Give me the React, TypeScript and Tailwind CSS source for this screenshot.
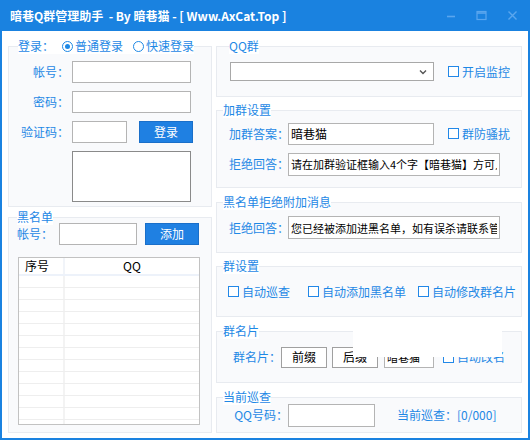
import type { ReactNode } from 'react'

const font = { fontFamily: '"Noto Sans CJK SC", "Noto Sans", sans-serif' }

function Box({
  title,
  legendLeft,
  className,
  children,
}: {
  title: ReactNode
  legendLeft: string
  className: string
  children?: ReactNode
}) {
  return (
    <div className={`relative border border-[#e8ebf0] bg-[#f9fafc] ${className}`}>
      <div
        className={`absolute -top-[9px] ${legendLeft} flex items-center whitespace-nowrap bg-white text-[12px] leading-[16px] text-[#1e88e5]`}
      >
        {title}
      </div>
      {children}
    </div>
  )
}

function Check({ label, className = '' }: { label: string; className?: string }) {
  return (
    <span className={`flex shrink-0 items-center whitespace-nowrap text-[12px] leading-[16px] text-[#1e88e5] ${className}`}>
      <span className="mr-[3px] inline-block h-[11px] w-[11px] border border-[#2288e8] bg-white" />
      {label}
    </span>
  )
}

function Radio({ label, checked }: { label: string; checked?: boolean }) {
  return (
    <span className="flex items-center">
      <span className="mr-[2px] flex h-[11px] w-[11px] items-center justify-center rounded-full border border-[#1e88e5] bg-white">
        {checked && <span className="h-[5px] w-[5px] rounded-full bg-[#1e88e5]" />}
      </span>
      {label}
    </span>
  )
}

function Field({ className, value = '' }: { className: string; value?: string }) {
  return (
    <input
      readOnly
      defaultValue={value}
      className={`shrink-0 border border-[#b4b4b4] bg-white px-[2px] text-[11px] text-black outline-none ${className}`}
    />
  )
}

function BlueButton({ label, className }: { label: string; className: string }) {
  return (
    <button className={`shrink-0 border border-[#1a6fc9] bg-[#1f80e2] text-[12px] text-white ${className}`}>
      {label}
    </button>
  )
}

function Label({ text, className }: { text: string; className: string }) {
  return (
    <span className={`shrink-0 whitespace-nowrap text-[12px] leading-[16px] text-[#1e88e5] ${className}`}>
      {text}
    </span>
  )
}

export default function App() {
  const rows = Array.from({ length: 13 })

  return (
    <div style={font} className="flex h-[440px] w-[530px] flex-col bg-[#1a82e0] px-[2px] pb-[2px]">
      {/* title bar */}
      <div className="flex h-[31px] shrink-0 items-center pl-[8px] pr-[10px]">
        <span className="whitespace-pre text-[12px] font-bold text-white">
          暗巷Q群管理助手  - By 暗巷猫 - [ Www.AxCat.Top ]
        </span>
        <div className="ml-auto flex items-center gap-[20px]">
          <svg width="10" height="10" viewBox="0 0 10 10">
            <path d="M1 5.5h8" stroke="#5aa6ee" strokeWidth="1.6" />
          </svg>
          <svg width="11" height="11" viewBox="0 0 11 11">
            <rect x="1" y="1.5" width="9" height="8" fill="none" stroke="#5aa6ee" strokeWidth="1.2" />
            <path d="M1 3h9" stroke="#5aa6ee" strokeWidth="1.6" />
          </svg>
          <svg width="11" height="11" viewBox="0 0 11 11">
            <path d="M1.5 1.5l8 8M9.5 1.5l-8 8" stroke="#5aa6ee" strokeWidth="1.4" />
          </svg>
        </div>
      </div>

      {/* body */}
      <div className="flex flex-1 gap-[4px] bg-white pl-[6px] pt-[15px]">
        {/* left column */}
        <div className="flex w-[204px] flex-col">
          <Box
            className="h-[161px]"
            legendLeft="left-[9px]"
            title={
              <>
                <span className="mr-[8px]">登录：</span>
                <span className="mr-[10px]">
                  <Radio label="普通登录" checked />
                </span>
                <Radio label="快速登录" />
              </>
            }
          >
            <div className="flex flex-col gap-[8px] pt-[14px]">
              <div className="flex items-center">
                <Label text="帐号：" className="w-[60px] text-right" />
                <Field className="ml-[3px] h-[22px] w-[119px]" />
              </div>
              <div className="flex items-center">
                <Label text="密码：" className="w-[60px] text-right" />
                <Field className="ml-[3px] h-[22px] w-[119px]" />
              </div>
              <div className="flex items-center">
                <Label text="验证码：" className="w-[60px] text-right" />
                <Field className="ml-[3px] h-[22px] w-[55px]" />
                <BlueButton label="登录" className="ml-[12px] h-[22px] w-[54px]" />
              </div>
              <div className="pl-[63px]">
                <div className="h-[51px] w-[119px] border border-[#8a8a8a] bg-white" />
              </div>
            </div>
          </Box>

          <Box className="mt-[10px] h-[216px]" legendLeft="left-[8px]" title="黑名单">
            <div className="flex items-center pl-[8px] pt-[5px]">
              <Label text="帐号：" className="" />
              <Field className="ml-[6px] h-[22px] w-[78px]" />
              <BlueButton label="添加" className="ml-[8px] h-[22px] w-[54px]" />
            </div>
            <div className="ml-[9px] mt-[12px] h-[168px] w-[182px] overflow-hidden border border-[#c2c2c2] bg-white text-[12px] text-black">
              <div className="flex h-[18px] border-b-2 border-[#edf2fa]">
                <div className="w-[46px] border-r-2 border-[#f1f4f9] pl-[6px] leading-[16px]">序号</div>
                <div className="flex-1 text-center leading-[16px]">QQ</div>
              </div>
              {rows.map((_, i) => (
                <div key={i} className="flex h-[12px] border-b border-[#eeeeee]">
                  <div className="w-[46px] border-r-2 border-[#f3f3f3]" />
                  <div className="flex-1" />
                </div>
              ))}
            </div>
          </Box>
        </div>

        {/* right column */}
        <div className="flex w-[306px] flex-col">
          <Box className="flex h-[51px] items-center" legendLeft="left-[12px]" title="QQ群">
            <div className="ml-[13px] flex h-[19px] w-[204px] items-center justify-end border border-[#a8a8a8] bg-white pr-[6px]">
              <svg width="8" height="6" viewBox="0 0 8 6">
                <path d="M1 1.5l3 3 3-3" fill="none" stroke="#555" strokeWidth="1.4" />
              </svg>
            </div>
            <Check label="开启监控" className="ml-[14px]" />
          </Box>

          <Box
            className="mt-[13px] flex h-[78px] flex-col justify-center gap-[8px]"
            legendLeft="left-[6px]"
            title="加群设置"
          >
            <div className="flex items-center pl-[12px]">
              <Label text="加群答案：" className="w-[59px] text-[11.5px]" />
              <Field className="h-[22px] w-[146px] text-[12px]" value="暗巷猫" />
              <Check label="群防骚扰" className="ml-[14px]" />
            </div>
            <div className="flex items-center pl-[12px]">
              <Label text="拒绝回答：" className="w-[59px] text-[11.5px]" />
              <Field className="h-[23px] w-[212px]" value="请在加群验证框输入4个字【暗巷猫】方可入群" />
            </div>
          </Box>

          <Box
            className="mt-[14px] flex h-[51px] items-center pl-[12px]"
            legendLeft="left-[6px]"
            title="黑名单拒绝附加消息"
          >
            <Label text="拒绝回答：" className="w-[59px] text-[11.5px]" />
            <Field className="h-[23px] w-[212px]" value="您已经被添加进黑名单，如有误杀请联系管理员" />
          </Box>

          <Box className="mt-[13px] flex h-[51px] items-center pl-[11px]" legendLeft="left-[6px]" title="群设置">
            <Check label="自动巡查" className="w-[80px]" />
            <Check label="自动添加黑名单" className="w-[110px]" />
            <Check label="自动修改群名片" />
          </Box>

          <Box className="mt-[14px] flex h-[52px] items-center" legendLeft="left-[6px]" title="群名片">
            <Label text="群名片：" className="w-[64px] text-right" />
            <button className="h-[21px] w-[46px] shrink-0 border border-[#a0a0a0] bg-white text-[12px] text-black">前缀</button>
            <button className="ml-[5px] h-[21px] w-[46px] shrink-0 border border-[#a0a0a0] bg-white text-[12px] text-black">后缀</button>
            <Field className="ml-[6px] h-[21px] w-[50px]" value="暗巷猫" />
            <Check label="自动改名" className="ml-[9px]" />
            <div className="absolute -top-[3px] left-[136px] h-[28px] w-[149px] bg-white" />
          </Box>

          <Box className="mt-[14px] flex h-[36px] items-center" legendLeft="left-[6px]" title="当前巡查">
            <Label text="QQ号码：" className="w-[71px] text-right" />
            <Field className="h-[23px] w-[87px]" />
            <Label text="当前巡查：[0/000]" className="ml-[22px]" />
          </Box>
        </div>
      </div>
    </div>
  )
}
